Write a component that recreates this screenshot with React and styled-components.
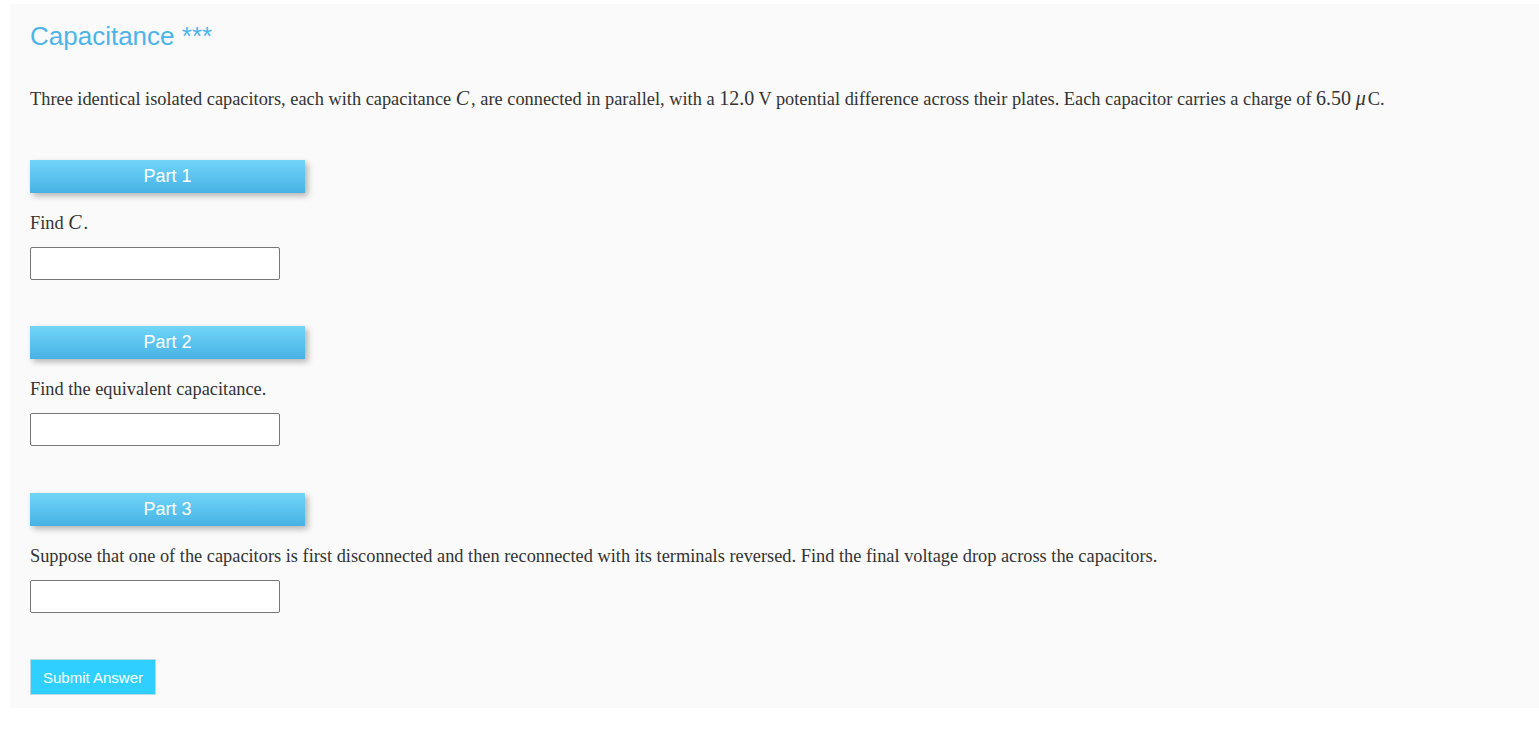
import styled, { createGlobalStyle } from 'styled-components';

const GlobalStyle = createGlobalStyle`
    body {
        margin: 0;
        background: #ffffff;
        font-family: "Liberation Serif", "Times New Roman", serif;
    }
`;

const PANEL = styled.div`
    margin: 4px 0 0 10px;
    padding: 16px 20px 13px 20px;
    background: #fafafa;
    color: #333333;
`;

const TITLE = styled.h2`
    margin: 0 0 35px 0;
    font-family: "Liberation Sans", Arial, sans-serif;
    font-weight: normal;
    font-size: 26px;
    line-height: 32px;
    color: #4db4e8;
`;

const TEXT = styled.p`
    margin: 0 0 ${(p) => p.$gap}px 0;
    font-size: 18.35px;
    line-height: 24px;
`;

const MATH = styled.span`
    font-family: "Liberation Serif", "Times New Roman", serif;
    font-style: ${(p) => (p.$italic ? 'italic' : 'normal')};
    font-size: 20px;
    line-height: 16px;
    padding-right: ${(p) => (p.$italic ? '2px' : '0')};
`;

const PART = styled.section`
    margin-bottom: ${(p) => p.$gap}px;
`;

const HEADER = styled.div`
    width: 275px;
    height: 33px;
    display: flex;
    align-items: center;
    justify-content: center;
    margin-bottom: 18px;
    background: linear-gradient(to bottom, #72d5f9, #46b2e4);
    box-shadow: 3px 3px 6px rgba(0, 0, 0, 0.28);
    color: #ffffff;
    font-family: "Liberation Sans", Arial, sans-serif;
    font-size: 18px;
`;

const INPUT = styled.input`
    display: block;
    box-sizing: border-box;
    width: 250px;
    height: 33px;
    margin: 0;
    border: 1px solid #767676;
    border-radius: 2px;
    background: #ffffff;
    font-size: 16px;
    padding: 0 6px;
`;

const SUBMIT = styled.button`
    box-sizing: border-box;
    width: 126px;
    height: 36px;
    border: 1px solid #b8d9e6;
    background: #2fd0ff;
    color: #ffffff;
    font-family: "Liberation Sans", Arial, sans-serif;
    font-size: 15px;
    padding: 0;
    cursor: pointer;
`;

const parts = [
    {
        name: 'Part 1',
        gap: 46,
        question: (
            <>
                Find <MATH $italic>C</MATH>.
            </>
        ),
    },
    { name: 'Part 2', gap: 47, question: 'Find the equivalent capacitance.' },
    {
        name: 'Part 3',
        gap: 46,
        question:
            'Suppose that one of the capacitors is first disconnected and then reconnected with its terminals reversed. Find the final voltage drop across the capacitors.',
    },
];

const App = () => {
    return (
        <>
            <GlobalStyle />
            <PANEL>
                <TITLE>Capacitance ***</TITLE>
                <TEXT $gap={49}>
                    Three identical isolated capacitors, each with capacitance{' '}
                    <MATH $italic>C</MATH>, are connected in parallel, with a{' '}
                    <MATH>12.0</MATH> V potential difference across their
                    plates. Each capacitor carries a charge of <MATH>6.50</MATH>{' '}
                    <MATH $italic>μ</MATH>C.
                </TEXT>

                {parts.map((part) => (
                    <PART key={part.name} $gap={part.gap}>
                        <HEADER>{part.name}</HEADER>
                        <TEXT $gap={12}>{part.question}</TEXT>
                        <INPUT type="text" />
                    </PART>
                ))}

                <SUBMIT type="button">Submit Answer</SUBMIT>
            </PANEL>
        </>
    );
};

export default App;
